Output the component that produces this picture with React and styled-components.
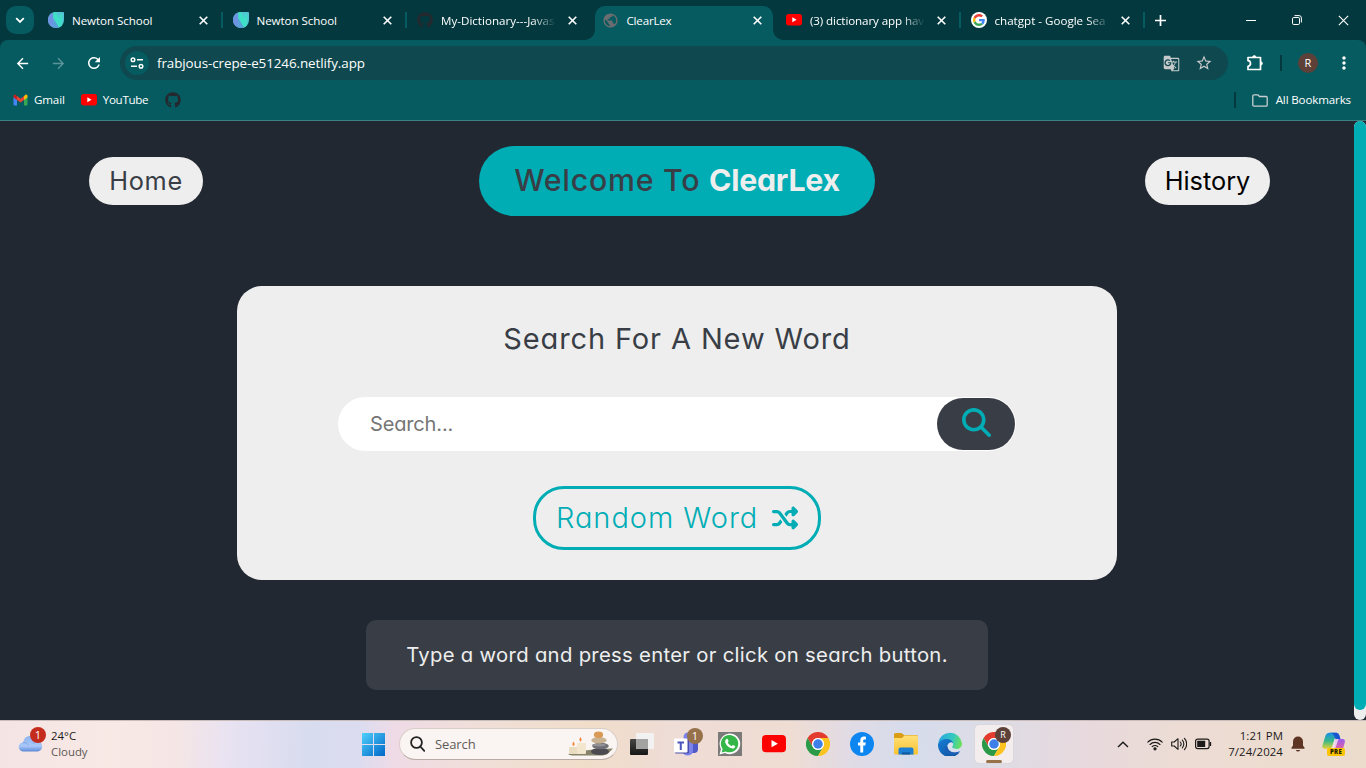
import React from "react";
import styled, { createGlobalStyle, css } from "styled-components";
import { FaGithub } from "react-icons/fa";
import { FaShuffle, FaMagnifyingGlass } from "react-icons/fa6";
import {
  MdArrowBack,
  MdArrowForward,
  MdRefresh,
  MdPublic,
  MdGTranslate,
  MdStarOutline,
  MdMoreVert,
} from "react-icons/md";

const Global = createGlobalStyle`
  *, *::before, *::after { box-sizing: border-box; }
  html, body { margin: 0; padding: 0; }
  body { width: 1366px; height: 768px; overflow: hidden; font-family: "Open Sans", "Noto Sans", sans-serif; }
  svg { display: block; flex: none; }
`;

const Screen = styled.div`
  width: 1366px;
  height: 768px;
  display: flex;
  flex-direction: column;
  background: #222831;
`;

/* ---------- browser ---------- */
const TabStrip = styled.div`
  height: 40px;
  flex: none;
  display: flex;
  align-items: stretch;
  background: #03393e;
  padding-left: 6px;
`;
const TabSearch = styled.div`
  width: 28px;
  height: 28px;
  margin: 6px 4px 0 0;
  border-radius: 10px;
  background: #055b60;
  display: grid;
  place-items: center;
`;
const Tab = styled.div`
  width: 184.5px;
  flex: none;
  height: 40px;
  display: flex;
  align-items: center;
  padding: 0 0 0 10px;
  color: #fff;
  position: relative;
  isolation: isolate;
  ${(p) =>
    p.$line &&
    css`
      &::after {
        content: "";
        position: absolute;
        right: 0;
        top: 12px;
        width: 2px;
        height: 16px;
        background: #055b60;
      }
    `}
  ${(p) =>
    p.$active &&
    css`
      &::before {
        content: "";
        position: absolute;
        z-index: -1;
        left: 3.5px;
        right: 3px;
        top: 6px;
        bottom: 0;
        border-radius: 10px 10px 0 0;
        background: #055b60;
      }
    `}
`;
const TabFoot = styled.span`
  position: absolute;
  bottom: 0;
  width: 10px;
  height: 10px;
  ${(p) => (p.$right ? "right: -7px;" : "left: -6.5px;")}
  background: radial-gradient(circle at ${(p) => (p.$right ? "100% 0" : "0 0")}, transparent 9.5px, #055b60 10px);
`;
const TabTitle = styled.span`
  width: 115px;
  margin-left: 8px;
  padding-top: 1px;
  font-size: 11.6px;
  line-height: 18px;
  letter-spacing: ${(p) => p.$ls || 0}px;
  white-space: nowrap;
  ${(p) => p.$fade && "mask-image: linear-gradient(90deg, #000 80%, transparent 100%);"}
`;
const TabClose = styled.span`
  width: 12px;
  height: 12px;
  margin-left: 10px;
  display: grid;
  place-items: center;
`;
const NewTab = styled.div`
  width: 31px;
  display: grid;
  place-items: center;
`;
const WindowControls = styled.div`
  margin-left: auto;
  display: flex;
  & > span {
    width: 46px;
    display: grid;
    place-items: center;
  }
`;
const ToolbarBack = styled.div`
  background: #03393e;
`;
const Toolbar = styled.div`
  height: 46px;
  display: flex;
  align-items: center;
  padding-left: 4px;
  background: #055b60;
  border-radius: 8px 8px 0 0;
  color: #fff;
`;
const NavButton = styled.span`
  width: 36px;
  display: grid;
  place-items: center;
  color: ${(p) => (p.$dim ? "#5b9398" : "#fff")};
`;
const Omnibox = styled.div`
  width: 1108px;
  height: 34px;
  margin-left: 8px;
  padding: 0 15px 0 5px;
  border-radius: 17px;
  background: #0f484e;
  display: flex;
  align-items: center;
`;
const SiteInfo = styled.span`
  width: 24px;
  height: 24px;
  border-radius: 50%;
  background: #055b60;
  display: grid;
  place-items: center;
`;
const Url = styled.span`
  flex: 1;
  margin-left: 8px;
  font-size: 13.4px;
  line-height: 20px;
  letter-spacing: -0.08px;
  color: #fff;
`;
const OmniActions = styled.span`
  display: flex;
  align-items: center;
  gap: 15px;
  color: #c5c9ca;
`;
const ToolbarEnd = styled.div`
  flex: 1;
  display: flex;
  align-items: center;
  padding-left: 18px;
`;
const Divider = styled.span`
  width: 2px;
  height: 16px;
  margin-left: ${(p) => p.$ml || 0}px;
  background: #03393e;
`;
const Avatar = styled.span`
  width: 20px;
  height: 20px;
  margin: 0 16px 0 16px;
  border-radius: 50%;
  background: #5d4037;
  color: #fff;
  font-size: 11px;
  line-height: 20px;
  text-align: center;
`;
const Bookmarks = styled.div`
  height: 35px;
  flex: none;
  display: flex;
  align-items: center;
  padding: 0 15px 6px 13px;
  background: #055b60;
  border-bottom: 1px solid #3b8083;
  color: #fff;
`;
const Bookmark = styled.span`
  display: flex;
  align-items: center;
  gap: ${(p) => p.$gap || 6}px;
  margin: 0 ${(p) => p.$mr || 0}px 0 ${(p) => p.$ml || 0}px;
  font-size: 11.6px;
  line-height: 18px;
  letter-spacing: ${(p) => p.$ls || 0}px;
  white-space: nowrap;
`;
const Spacer = styled.span`
  flex: 1;
`;

/* ---------- page ---------- */
const PageRow = styled.div`
  height: 599px;
  flex: none;
  display: flex;
  background: #222831;
`;
const Page = styled.main`
  flex: 1;
  display: flex;
  flex-direction: column;
  align-items: center;
  padding-top: 25px;
  font-family: Inter, "Open Sans", sans-serif;
  font-feature-settings: "cv11";
`;
const ScrollTrack = styled.div`
  width: 12px;
  height: 599px;
  background: #eee;
  border-radius: 6px;
`;
const ScrollThumb = styled.div`
  height: 589px;
  background: #00adb5;
  border-radius: 6px;
`;
const Header = styled.header`
  width: 100%;
  height: 70px;
  display: grid;
  grid-template-columns: 1fr auto 1fr;
  align-items: center;
`;
const NavPill = styled.a`
  width: ${(p) => p.$w}px;
  height: 48px;
  border-radius: 24px;
  background: #eee;
  color: ${(p) => p.$color};
  font-size: 25.3px;
  font-weight: 400;
  line-height: 47px;
  letter-spacing: ${(p) => p.$ls || 0}px;
  text-align: center;
  white-space: nowrap;
  ${(p) => (p.$end ? "justify-self: end; margin-right: 84px;" : "margin-left: 89px;")}
`;
const TitlePill = styled.h1`
  width: 396px;
  height: 70px;
  margin: 0;
  border-radius: 35px;
  background: #00adb5;
  color: #393e46;
  font-size: 30.3px;
  font-weight: 500;
  line-height: 69px;
  letter-spacing: 0.75px;
  text-align: center;
  white-space: nowrap;
  & b {
    font-weight: 700;
    color: #eee;
    letter-spacing: -0.25px;
  }
`;
const Card = styled.section`
  width: 880px;
  height: 294px;
  margin-top: 70px;
  border-radius: 25px;
  background: #eee;
  display: flex;
  flex-direction: column;
  align-items: center;
`;
const CardTitle = styled.h2`
  margin: 29px 0 0;
  height: 48px;
  font-size: 29px;
  font-weight: 400;
  line-height: 48px;
  letter-spacing: 0.88px;
  color: #393e46;
  white-space: nowrap;
`;
const SearchField = styled.div`
  width: 678px;
  height: 54px;
  margin-top: 34px;
  padding: 1px 1px 1px 32px;
  border-radius: 27px;
  background: #fff;
  display: flex;
  align-items: center;
  justify-content: space-between;
  color: #757575;
  font-size: 20px;
  letter-spacing: -0.15px;
`;
const SearchButton = styled.span`
  width: 78px;
  height: 52px;
  border-radius: 26px;
  background: #393e46;
  color: #00adb5;
  display: grid;
  justify-items: center;
  padding-top: 10px;
`;
const RandomButton = styled.div`
  width: 288px;
  height: 64px;
  margin-top: 35px;
  border: 3px solid #00adb5;
  border-radius: 31px;
  color: #00adb5;
  display: flex;
  align-items: center;
  justify-content: space-between;
  padding: 0 20px 1px 20px;
  font-size: 29px;
  font-weight: 300;
  letter-spacing: 0.95px;
  white-space: nowrap;
`;
const Message = styled.p`
  width: 622px;
  height: 70px;
  margin: 40px 0 0;
  border-radius: 10px;
  background: #393e46;
  color: #eee;
  font-size: 20.3px;
  line-height: 69px;
  letter-spacing: 0.3px;
  text-align: center;
  white-space: nowrap;
`;

/* ---------- taskbar ---------- */
const Taskbar = styled.footer`
  height: 48px;
  flex: none;
  display: flex;
  align-items: center;
  padding-bottom: 1px;
  border-top: 1px solid #c9bdbb;
  background: linear-gradient(
    92deg,
    #f4e4e4 0,
    #f8e9e5 110px,
    #f5e6e6 180px,
    #e8e2f2 230px,
    #d8dcef 310px,
    #dcdcf0 360px,
    #eedbe6 395px,
    #f0dfd8 480px,
    #f0ddc9 590px,
    #eedcd6 670px,
    #efddd3 790px,
    #e0dbe5 850px,
    #d6dcec 910px,
    #dcdce6 980px,
    #e8d9dd 1090px,
    #ecdcd4 1180px,
    #ecdccc 1366px
  );
  color: #1c1a1a;
`;
const Weather = styled.div`
  width: 351px;
  padding-left: 18px;
  display: flex;
  align-items: center;
  gap: 5px;
`;
const TwoLines = styled.div`
  display: flex;
  flex-direction: column;
  padding-bottom: 1px;
  font-size: 11.4px;
  line-height: 16px;
  text-align: ${(p) => (p.$end ? "right" : "left")};
  letter-spacing: ${(p) => p.$ls || 0}px;
`;
const Muted = styled.span`
  color: #5d5756;
`;
const AppCell = styled.span`
  width: 44px;
  height: 46px;
  display: grid;
  place-items: center;
`;
const ActiveApp = styled.span`
  width: 38px;
  height: 38px;
  border-radius: 4px;
  background: #f3eeed;
  box-shadow: 0 0 1px #bbb2b0;
  display: flex;
  flex-direction: column;
  align-items: center;
  justify-content: space-between;
  padding-top: 7px;
`;
const RunningMark = styled.span`
  width: 16px;
  height: 3px;
  border-radius: 2px;
  background: #96714a;
`;
const TaskSearch = styled.div`
  width: 219px;
  height: 32px;
  margin: 0 2px 0 4px;
  padding: 0 3px 0 10px;
  border-radius: 16px;
  border: 1px solid #d9cdc8;
  border-bottom-color: #b9aca6;
  background: #faf5f2;
  display: flex;
  align-items: center;
  font-size: 13px;
  color: #5f5a58;
  & > span {
    flex: 1;
    margin-left: 10px;
    letter-spacing: -0.1px;
  }
`;
const Tray = styled.div`
  flex: 1;
  display: flex;
  align-items: center;
  padding-left: 101px;
`;
const TrayIcons = styled.div`
  display: flex;
  align-items: center;
  gap: 8px;
  margin: 0 0 0 18px;
`;
const Clock = styled.div`
  width: 71px;
  margin-right: 8px;
`;

/* ---------- drawings ---------- */
const Cross = ({ size = 9, w = 1.6 }) => (
  <svg width={size} height={size} viewBox="0 0 9 9" stroke="#fff" strokeWidth={w} fill="none">
    <path d="M.7.7l7.6 7.6M8.3.7L.7 8.3" />
  </svg>
);
const NewtonIcon = () => (
  <svg width="16" height="16" viewBox="0 0 16 16">
    <path d="M8 0h7q1 0 1 1v7a8 8 0 1 1-8-8z" fill="#52c5d4" />
    <path d="M5.200.500v15A8 8 0 0 1 5.200.500z" fill="#6f93e3" />
    <path d="M5.200 4L11 15.400A8 8 0 0 1 5.200 15.500z" fill="#5a9fdc" />
    <path d="M5.200.500L8 0l3.600 7V2.500h2.600v10.500q-1.200 1.800-3.200 2.500L5.200 6z" fill="#3edfc6" />
  </svg>
);
const YouTubeIcon = ({ w = 16 }) => (
  <svg width={w} height={w * 0.72} viewBox="0 0 24 17.300">
    <rect width="24" height="17.300" rx="4" fill="#f00" />
    <path d="M9.500 5l6.400 3.650-6.400 3.650z" fill="#fff" />
  </svg>
);
const GoogleIcon = () => (
  <svg width="16" height="16" viewBox="0 0 64 64">
    <circle cx="32" cy="32" r="32" fill="#fff" />
    <g transform="translate(8 8)">
      <path fill="#EA4335" d="M24 9.5c3.54 0 6.71 1.22 9.21 3.6l6.85-6.85C35.9 2.38 30.47 0 24 0 14.62 0 6.51 5.38 2.56 13.220l7.980 6.190C12.430 13.720 17.740 9.500 24 9.500z" />
      <path fill="#4285F4" d="M46.980 24.550c0-1.570-.150-3.090-.380-4.550H24v9.020h12.940c-.580 2.960-2.260 5.480-4.780 7.180l7.730 6c4.510-4.180 7.090-10.360 7.090-17.650z" />
      <path fill="#FBBC05" d="M10.530 28.590c-.480-1.450-.760-2.990-.760-4.590s.270-3.140.760-4.590l-7.980-6.190C.920 16.460 0 20.120 0 24c0 3.880.920 7.540 2.560 10.780l7.970-6.190z" />
      <path fill="#34A853" d="M24 48c6.480 0 11.930-2.130 15.890-5.810l-7.730-6c-2.150 1.450-4.920 2.300-8.160 2.300-6.260 0-11.570-4.220-13.470-9.910l-7.980 6.190C6.510 42.620 14.620 48 24 48z" />
    </g>
  </svg>
);
const GmailIcon = () => (
  <svg width="15" height="12" viewBox="0 0 15 12">
    <path d="M.5 3v7.500q0 1 1 1H4V5z" fill="#4285f4" />
    <path d="M11 5v6.500h2.500q1 0 1-1V3z" fill="#34a853" />
    <path d="M.5 3v-1Q.7.3 2.500.7L4 2v4L.5 3.600z" fill="#c5221f" />
    <path d="M14.500 3V2Q14.300.3 12.500.7L11 2v4l3.500-2.400z" fill="#fbbc04" />
    <path d="M4 2l3.500 2.700L11 2v4L7.500 8.600 4 6z" fill="#ea4335" />
  </svg>
);
const TuneIcon = () => (
  <svg width="14" height="12" viewBox="0 0 14 12" fill="none" stroke="#fff" strokeWidth="1.500">
    <circle cx="3" cy="2.800" r="1.800" />
    <path d="M7 2.800h6M1 9.200h6" />
    <circle cx="11" cy="9.200" r="1.800" />
  </svg>
);
const PuzzleIcon = () => (
  <svg width="18" height="18" viewBox="0 0 18 18" fill="none" stroke="#fff" strokeWidth="1.700" strokeLinejoin="round">
    <path d="M2 3.500h12.500v12H2v-3.200c3.300-.4 3.300-5.200 0-5.600z" />
    <path d="M6.600 3.300a1.700 1.700 0 0 1 3.400 0zM14.700 7.700a1.700 1.700 0 0 1 0 3.400z" fill="#fff" strokeWidth=".8" />
  </svg>
);
const FolderIcon = () => (
  <svg width="16" height="13" viewBox="0 0 16 13" fill="none" stroke="#c9cfd0" strokeWidth="1.300" strokeLinejoin="round">
    <path d="M.8 11V2q0-1.200 1.200-1.200h3.800L7.500 2.500H14q1.200 0 1.200 1.200V11q0 1.200-1.200 1.200H2Q.8 12.200.8 11z" />
  </svg>
);
const ChromeIcon = () => (
  <svg width="24" height="24" viewBox="0 0 48 48">
    <path fill="#e33b2e" d="M24 12h20.800A24 24 0 0 0 3.200 12l10.400 18A12 12 0 0 1 24 12z" />
    <path fill="#2b9a48" d="M34.400 30L24 48A24 24 0 0 1 3.200 12l10.400 18a12 12 0 0 0 20.800 0z" />
    <path fill="#fcc31e" d="M24 12h20.800A24 24 0 0 1 24 48l10.400-18A12 12 0 0 0 24 12z" />
    <circle cx="24" cy="24" r="12" fill="#fff" />
    <circle cx="24" cy="24" r="9.500" fill="#3f7fea" />
  </svg>
);
const BadgeHost = styled.span`
  position: relative;
  display: block;
  margin: 0 0 ${(p) => p.$mb || 0}px ${(p) => p.$ml || 0}px;
`;
const Badge = styled.span`
  position: absolute;
  left: ${(p) => p.$x}px;
  top: ${(p) => p.$y}px;
  width: 16px;
  height: 16px;
  border-radius: 50%;
  background: ${(p) => p.$bg};
  color: #fff;
  font-size: ${(p) => p.$fs || 11}px;
  line-height: 16px;
  text-align: center;
`;
const CloudIcon = () => (
  <svg width="28" height="22" viewBox="0 5 28 22">
    <defs>
      <linearGradient id="cloud" x1="0" y1="0" x2="0" y2="1">
        <stop offset="0" stopColor="#8fb3ee" />
        <stop offset=".65" stopColor="#a9c8f8" />
        <stop offset="1" stopColor="#5d88d8" />
      </linearGradient>
    </defs>
    <path d="M5.500 26.500a4.600 4.600 0 0 1-.3-9.200 7.400 7.400 0 0 1 14.300-1.400 5.400 5.400 0 0 1 .5 10.600z" fill="url(#cloud)" />
    <path d="M5 17.500q3.500-.5 5.300 2.500M19 16q-3 .2-4 2.500" stroke="#7fa6e8" fill="none" />
  </svg>
);
const WindowsIcon = () => (
  <svg width="24" height="24" viewBox="0 0 24 24">
    <defs>
      <linearGradient id="win" x1="0" y1="0" x2="1" y2="1">
        <stop offset="0" stopColor="#4fd0fb" />
        <stop offset="1" stopColor="#0067c8" />
      </linearGradient>
    </defs>
    <path fill="url(#win)" d="M1 1.500q0-.5.5-.5H12v11H1zM13 1h10.500q.5 0 .5.500V12H13zM1 13h11v11H1.500q-.5 0-.5-.5zM13 13h11v10.500q0 .5-.5.500H13z" />
  </svg>
);
const LensIcon = () => (
  <svg width="15" height="16" viewBox="0 0 15 16" fill="none" stroke="#222" strokeWidth="1.800">
    <circle cx="6.500" cy="6.500" r="5.400" />
    <path d="M10.300 10.500l4 4.400" strokeLinecap="round" />
  </svg>
);
const StonesIcon = () => (
  <svg width="46" height="26" viewBox="0 0 46 26">
    <path d="M0 23.500q12-5 45-6l-5 5q-2 2-8 2H4z" fill="#87826a" />
    <rect x="1" y="16" width="10" height="7" rx="1" fill="#eadcc0" />
    <rect x="9" y="12" width="9" height="11" rx="1" fill="#f2e6cf" />
    <path d="M5.500 10.500q2.200 3 0 4.600-2.200-1.600 0-4.600zM12.500 6q2.200 3 0 4.800-2.200-1.800 0-4.800z" fill="#f0843a" />
    <ellipse cx="32" cy="20.500" rx="9" ry="3.600" fill="#4b4a50" />
    <ellipse cx="32.500" cy="15" rx="8.300" ry="3.300" fill="#6f6e74" />
    <ellipse cx="31" cy="14" rx="7" ry="1.500" fill="#929196" />
    <ellipse cx="31" cy="9.200" rx="7.600" ry="3.200" fill="#c9b292" />
    <ellipse cx="30.500" cy="3.800" rx="4.600" ry="3.200" fill="#d99a55" />
  </svg>
);
const DesksIcon = () => (
  <svg width="24" height="24" viewBox="0 0 24 24">
    <defs>
      <linearGradient id="desk" x1="0" y1="0" x2="0" y2="1">
        <stop offset="0" stopColor="#474747" />
        <stop offset="1" stopColor="#161616" />
      </linearGradient>
    </defs>
    <rect x="0" y="7" width="18" height="16" rx="1" fill="url(#desk)" />
    <rect x="6" y="1" width="18" height="16" rx="1" fill="#f2f2f2" />
    <path d="M6 7h12v10H7q-1 0-1-1z" fill="#a3a3a1" />
  </svg>
);
const TeamsIcon = () => (
  <svg width="25" height="28" viewBox="0 0 25 28">
    <circle cx="14" cy="7" r="4.500" fill="#7b83eb" />
    <path d="M16 10h8v9q0 4-4 4h-4z" fill="#5059c9" />
    <path d="M9 10h10v10q0 5-5 5.500-4.500 0-6-4z" fill="#7b83eb" />
    <rect x="1" y="9" width="14" height="14.500" rx="1" fill="#4b4ba8" />
    <rect x="0" y="8.500" width="13.500" height="14" rx="1" fill="#fff" />
    <path d="M3.500 12.500H10M6.750 12.500v7.500" stroke="#4b53bc" strokeWidth="2" />
  </svg>
);
const WhatsAppIcon = () => (
  <svg width="24" height="24" viewBox="0 0 24 24">
    <rect width="24" height="24" fill="#7a7a78" />
    <path d="M1.500 22.500L3 17a10.300 10.300 0 1 1 4 3.900z" fill="#fff" />
    <path d="M3.600 20.400l1-3.500a8.700 8.700 0 1 1 3 2.500z" fill="#35b648" />
    <path
      d="M8.700 6.800c.7-.3 1 0 1.200.6l.7 1.600c.1.500-.8 1.200-.8 1.500.9 1.700 2 2.700 3.700 3.500.5.100 1-1.100 1.400-1.100.2 0 2 .9 2.200 1 .3.800-.5 2.200-1.500 2.500-1.500.5-3.400-.3-5.200-1.600-1.700-1.400-3-3.200-3.200-4.600-.2-1.600.5-2.900 1.500-3.400z"
      fill="#fff"
    />
  </svg>
);
const FacebookIcon = () => (
  <svg width="24" height="24" viewBox="0 0 24 24">
    <circle cx="12" cy="12" r="12" fill="#0d86f2" />
    <path d="M10.300 20.500v-7H8v-3h2.300V8.600c0-2.700 1.300-4 3.700-4 .8 0 1.500.1 1.900.2v2.700h-1.300c-1.100 0-1.400.5-1.400 1.500v1.500h2.600l-.5 3h-2.100v7z" fill="#fff" />
  </svg>
);
const ExplorerIcon = () => (
  <svg width="24" height="24" viewBox="0 0 24 24">
    <defs>
      <linearGradient id="fold" x1="0" y1="0" x2="0" y2="1">
        <stop offset="0" stopColor="#ffe079" />
        <stop offset="1" stopColor="#f9c22f" />
      </linearGradient>
    </defs>
    <path d="M0 2.500Q0 1 1.500 1h6L10 3h12.500Q24 3 24 4.500V10H0z" fill="#d99e16" />
    <path d="M0 6h8l2.500-2.500h12Q24 3.500 24 5v16q0 1.500-1.500 1.500h-21Q0 22.500 0 21z" fill="url(#fold)" />
    <path d="M4.500 22.500v-5q0-2 2-2h11q2 0 2 2v5z" fill="#1b7fd4" />
    <path d="M8 22.500v-2.200h8v2.200z" fill="#0f5ba5" />
  </svg>
);
const EdgeIcon = () => (
  <svg width="24" height="24" viewBox="0 0 24 24">
    <defs>
      <linearGradient id="edgeTop" x1="0" y1=".3" x2="1" y2=".5">
        <stop offset="0" stopColor="#2aa5e0" />
        <stop offset=".6" stopColor="#35c9c0" />
        <stop offset="1" stopColor="#6be05a" />
      </linearGradient>
      <linearGradient id="edgeLow" x1="0" y1="0" x2="1" y2="1">
        <stop offset="0" stopColor="#1580d8" />
        <stop offset="1" stopColor="#0c4a94" />
      </linearGradient>
    </defs>
    <path d="M.2 11A12 12 0 0 1 24 11.500c0 3.500-2.500 5.500-5.300 5.500-2.700 0-4.700-1-4.700-2 0-.6 1-1.200 1-3 0-2.300-2.400-4.500-6-4.500-4 0-7.500 2-8.800 3.500z" fill="url(#edgeTop)" />
    <path d="M0 12.500C.5 9.500 4 7 8.500 7c3.500 0 6.500 2 6.500 4.800-1-2-5.500-1.500-5.500 2.700 0 4 4 6.500 8 6.500 2 0 3.500-.7 4.700-1.600A12 12 0 0 1 0 12.500z" fill="url(#edgeLow)" />
    <path d="M9.500 14.500c0-2.500 1.800-4 3.500-4.200 1.300.2 2 1 2 2 0 1.500-1 2-1 2.700 0 1 2 2 4.700 2 2 0 3.200-.6 3.800-1 .3.200 0 1.400-.7 2.500-1.300.9-8 2.500-10.300-.5-.8-1-1.800-1-2-3.500z" fill="#d9e0ee" />
    <path d="M7 15c-.5 4 3 8.200 8 8.500 3-.8 5.700-2.500 7.200-4.800-5.200 3-12 2-12.700-4.200z" fill="#1b5fb4" />
  </svg>
);
const WifiIcon = () => (
  <svg width="16" height="14" viewBox="0 0 16 14" fill="none" stroke="#1c1a1a" strokeWidth="1.100" strokeLinecap="round">
    <path d="M.8 5.200a10 10 0 0 1 14.400 0M3 7.500a7 7 0 0 1 10 0M5.200 9.700a4 4 0 0 1 5.600 0" />
    <circle cx="8" cy="11.800" r="1.100" fill="#1c1a1a" />
  </svg>
);
const SpeakerIcon = () => (
  <svg width="16" height="14" viewBox="0 0 16 14" fill="none" stroke="#1c1a1a" strokeWidth="1.100" strokeLinejoin="round" strokeLinecap="round">
    <path d="M.7 5v4h2.500L7 12.300V1.700L3.200 5z" />
    <path d="M9.300 5a3 3 0 0 1 0 4M11.300 3.200a5.500 5.500 0 0 1 0 7.600M13.400 1.400a8 8 0 0 1 0 11.200" />
  </svg>
);
const BatteryIcon = () => (
  <svg width="17" height="12" viewBox="0 0 17 12">
    <rect x=".6" y="1.100" width="13.500" height="9.500" rx="2" fill="none" stroke="#1c1a1a" strokeWidth="1.200" />
    <rect x="2.200" y="2.800" width="8" height="6.200" rx=".5" fill="#1c1a1a" />
    <path d="M15.400 4v4" stroke="#1c1a1a" strokeWidth="1.500" />
  </svg>
);
const BellIcon = () => (
  <svg width="14" height="16" viewBox="0 0 14 16" fill="#5e3423">
    <path d="M7 .5a5 5 0 0 1 5 5v4l1.700 2.500q.2.800-.7.800H1q-.9 0-.7-.8L2 9.500v-4a5 5 0 0 1 5-5zM4.800 14h4.400q-.7 1.500-2.200 1.500T4.800 14z" />
  </svg>
);
const PreLabel = styled.span`
  position: absolute;
  left: 5px;
  top: 16px;
  width: 18px;
  height: 8px;
  border-radius: 2px;
  background: #fcc404;
  color: #241c00;
  font: 800 6px/8px "Open Sans", sans-serif;
  letter-spacing: 0.3px;
  text-align: center;
`;
const CopilotIcon = () => (
  <svg width="24" height="24" viewBox="0 0 24 24">
    <defs>
      <linearGradient id="copA" x1="0" y1="0" x2="0" y2="1">
        <stop offset="0" stopColor="#1a8fe6" />
        <stop offset=".5" stopColor="#35b88a" />
        <stop offset="1" stopColor="#e5d136" />
      </linearGradient>
      <linearGradient id="copB" x1="0" y1="0" x2="0" y2="1">
        <stop offset="0" stopColor="#9a5cf0" />
        <stop offset="1" stopColor="#f5668a" />
      </linearGradient>
    </defs>
    <path d="M7 .8h8l-5 14q-.7 2-2.500 2H2.500Q0 16.500.3 14L3.500 3.500Q4.500.8 7 .8z" fill="url(#copA)" />
    <path d="M8 .8h6.500q2.300 0 3 2.700l1 3.500h-5L12 3.500Q11 .8 8 .8z" fill="#1756cf" />
    <path d="M13 7h7.500q2.800 0 2.400 3l-2 7Q20 20 17 20h-7q1.500-1 1.700-4L13 11z" fill="url(#copB)" />
    <path d="M12.500 7h4l-3 9q-.7 2-2.500 2l-1-1z" fill="#f6e3ec" opacity=".8" />
  </svg>
);

const tabs = [
  { title: "Newton School", icon: <NewtonIcon />, line: true, ls: -0.07 },
  { title: "Newton School", icon: <NewtonIcon />, line: true, ls: -0.07 },
  { title: "My-Dictionary---Javas", icon: <FaGithub size={16} color="#24292f" />, fade: true },
  { title: "ClearLex", icon: <MdPublic size={17} color="#6b6d70" />, active: true, ls: -0.2 },
  { title: "(3) dictionary app hav", icon: <YouTubeIcon />, line: true, fade: true, ls: -0.1 },
  { title: "chatgpt - Google Sea", icon: <GoogleIcon />, line: true, fade: true },
];

export default function App() {
  return (
    <>
      <Global />
      <Screen>
        <TabStrip>
          <TabSearch>
            <svg width="10" height="7" viewBox="0 0 10 7" fill="none" stroke="#fff" strokeWidth="1.800">
              <path d="M1.200 1.200L5 5l3.800-3.800" />
            </svg>
          </TabSearch>
          {tabs.map((t, i) => (
            <Tab key={i} $line={t.line} $active={t.active}>
              {t.active && (
                <>
                  <TabFoot />
                  <TabFoot $right />
                </>
              )}
              {t.icon}
              <TabTitle $fade={t.fade} $ls={t.ls}>{t.title}</TabTitle>
              <TabClose>
                <Cross />
              </TabClose>
            </Tab>
          ))}
          <NewTab>
            <svg width="11" height="11" viewBox="0 0 11 11" stroke="#fff" strokeWidth="1.700">
              <path d="M5.500 0v11M0 5.500h11" />
            </svg>
          </NewTab>
          <WindowControls>
            <span>
              <svg width="10" height="10" viewBox="0 0 10 10" stroke="#fff">
                <path d="M0 5.500h10" />
              </svg>
            </span>
            <span>
              <svg width="10" height="10" viewBox="0 0 10 10" stroke="#fff" fill="none">
                <rect x=".5" y="2.500" width="7" height="7" rx="1.300" />
                <path d="M2.500.6h4.500q2.400 0 2.400 2.400v4.500" />
              </svg>
            </span>
            <span>
              <Cross size={11} w={0.9} />
            </span>
          </WindowControls>
        </TabStrip>
        <ToolbarBack>
          <Toolbar>
            <NavButton><MdArrowBack size={17} /></NavButton>
            <NavButton $dim><MdArrowForward size={17} /></NavButton>
            <NavButton><MdRefresh size={18} /></NavButton>
            <Omnibox>
              <SiteInfo><TuneIcon /></SiteInfo>
              <Url>frabjous-crepe-e51246.netlify.app</Url>
              <OmniActions>
                <MdGTranslate size={17} />
                <MdStarOutline size={18} />
              </OmniActions>
            </Omnibox>
            <ToolbarEnd>
              <PuzzleIcon />
              <Divider $ml={16} />
              <Avatar>R</Avatar>
              <MdMoreVert size={20} />
            </ToolbarEnd>
          </Toolbar>
        </ToolbarBack>
        <Bookmarks>
          <Bookmark $mr={16} $ls={-0.15}><GmailIcon />Gmail</Bookmark>
          <Bookmark $mr={17} $ls={-0.3}><YouTubeIcon />YouTube</Bookmark>
          <FaGithub size={16} color="#24292f" />
          <Spacer />
          <Divider />
          <Bookmark $ml={16} $gap={8} $ls={-0.15}><FolderIcon />All Bookmarks</Bookmark>
        </Bookmarks>

        <PageRow>
          <Page>
            <Header>
              <NavPill $w={114} $color="#393e46" $ls={0.7}>Home</NavPill>
              <TitlePill>Welcome To <b>ClearLex</b></TitlePill>
              <NavPill $w={125} $color="#000" $end>History</NavPill>
            </Header>
            <Card>
              <CardTitle>Search For A New Word</CardTitle>
              <SearchField>
                Search...
                <SearchButton><FaMagnifyingGlass size={29} /></SearchButton>
              </SearchField>
              <RandomButton>
                Random Word
                <FaShuffle size={26} />
              </RandomButton>
            </Card>
            <Message>Type a word and press enter or click on search button.</Message>
          </Page>
          <ScrollTrack>
            <ScrollThumb />
          </ScrollTrack>
        </PageRow>

        <Taskbar>
          <Weather>
            <BadgeHost $mb={7}>
              <CloudIcon />
              <Badge $x={12} $y={-3} $bg="#c42b1c">1</Badge>
            </BadgeHost>
            <TwoLines>
              <span>24°C</span>
              <Muted>Cloudy</Muted>
            </TwoLines>
          </Weather>
          <AppCell><WindowsIcon /></AppCell>
          <TaskSearch>
            <LensIcon />
            <span>Search</span>
            <StonesIcon />
          </TaskSearch>
          <AppCell><DesksIcon /></AppCell>
          <AppCell>
            <BadgeHost $ml={1}>
              <TeamsIcon />
              <Badge $x={13} $y={-2} $bg="#96714a">1</Badge>
            </BadgeHost>
          </AppCell>
          <AppCell><WhatsAppIcon /></AppCell>
          <AppCell><YouTubeIcon w={24} /></AppCell>
          <AppCell><ChromeIcon /></AppCell>
          <AppCell><FacebookIcon /></AppCell>
          <AppCell><ExplorerIcon /></AppCell>
          <AppCell><EdgeIcon /></AppCell>
          <AppCell>
            <ActiveApp>
              <BadgeHost>
                <ChromeIcon />
                <Badge $x={13} $y={-5} $bg="#5d4037" $fs={9}>R</Badge>
              </BadgeHost>
              <RunningMark />
            </ActiveApp>
          </AppCell>
          <Tray>
            <svg width="12" height="7" viewBox="0 0 12 7" fill="none" stroke="#1c1a1a" strokeWidth="1.400">
              <path d="M1 6l5-4.800L11 6" />
            </svg>
            <TrayIcons>
              <WifiIcon />
              <SpeakerIcon />
              <BatteryIcon />
            </TrayIcons>
            <Clock>
              <TwoLines $end $ls={0.1}>
                <span>1:21 PM</span>
                <span>7/24/2024</span>
              </TwoLines>
            </Clock>
            <BellIcon />
            <BadgeHost $ml={17}>
              <CopilotIcon />
              <PreLabel>PRE</PreLabel>
            </BadgeHost>
          </Tray>
        </Taskbar>
      </Screen>
    </>
  );
}
